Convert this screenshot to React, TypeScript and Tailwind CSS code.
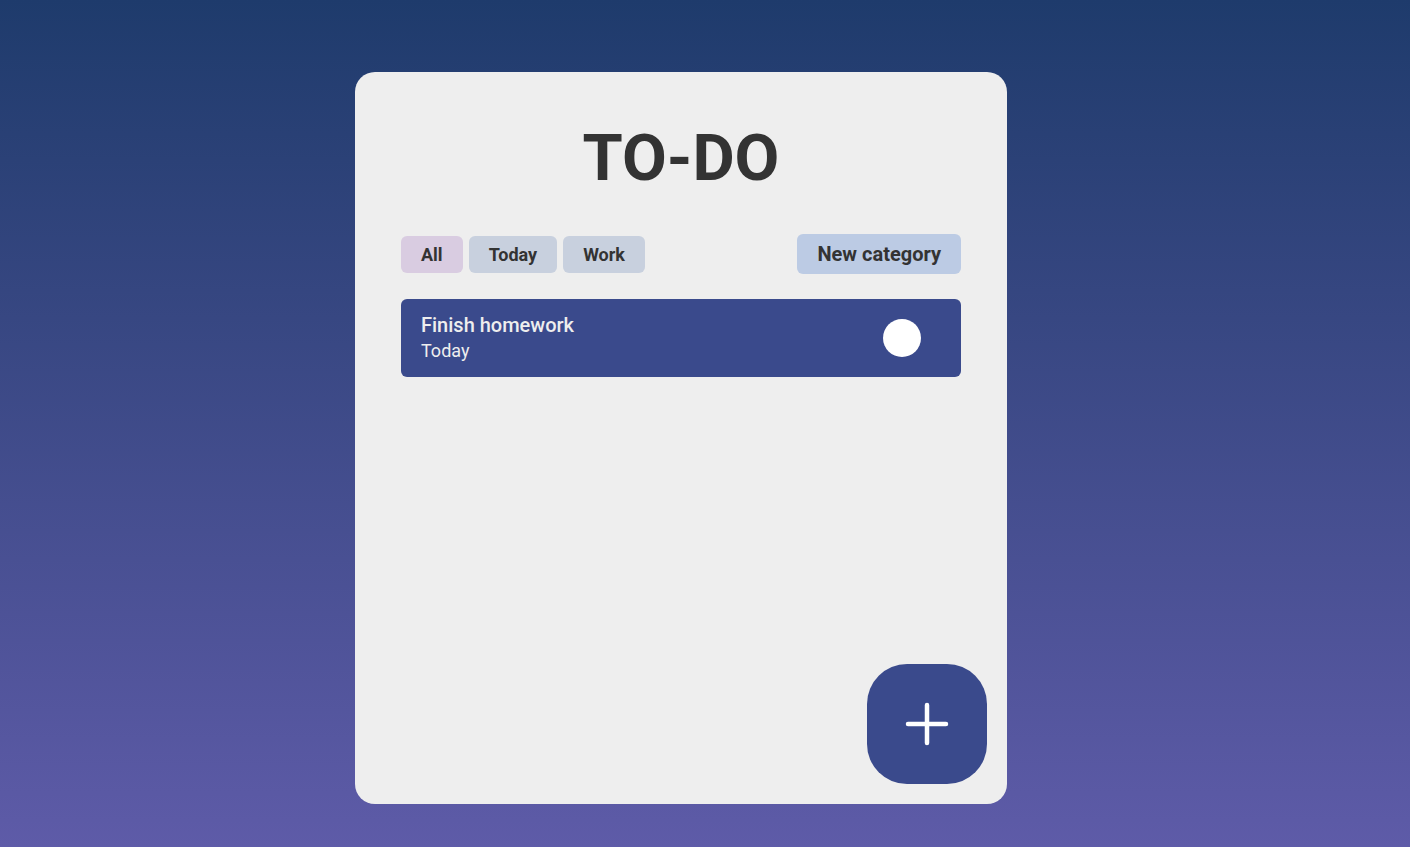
import React from 'react'

type Task = {
  title: string
  category: string
}

const categories = ['All', 'Today', 'Work']

const tasks: Task[] = [{ title: 'Finish homework', category: 'Today' }]

const App = () => {
  return (
    <div
      className="min-h-screen w-full bg-gradient-to-b from-[#1e3b6c] to-[#5e5ba8] flex justify-center pt-[72px] pb-[43px]"
      style={{ fontFamily: 'Roboto, "Liberation Sans", sans-serif' }}
    >
      <div className="relative w-[652px] h-[732px] mr-[48px] bg-[#eeeeee] rounded-[20px] px-[46px]">
        <h1 className="text-center text-[65px] font-bold text-[#333333] leading-none pt-[54px]">
          TO-DO
        </h1>

        <div className="flex items-center justify-between mt-[43px]">
          <div className="flex gap-[6px]">
            {categories.map((c, i) => (
              <button
                key={c}
                className={`h-[37px] rounded-[6px] text-[18px] font-bold text-[#333333] px-[20px] ${
                  i === 0 ? 'bg-[#d9cce1]' : 'bg-[#c8d0de]'
                }`}
              >
                {c}
              </button>
            ))}
          </div>
          <button className="h-[40px] px-[20px] rounded-[6px] bg-[#bccbe4] text-[20px] font-bold text-[#333333]">
            New category
          </button>
        </div>

        <div className="mt-[25px] flex flex-col gap-2">
          {tasks.map((t) => (
            <div
              key={t.title}
              className="h-[78px] rounded-[6px] bg-[#3a4a8c] flex items-center justify-between pl-[20px] pr-[40px]"
            >
              <div className="flex flex-col text-[#eeeeee]">
                <span className="text-[20px] font-medium leading-[26px]">{t.title}</span>
                <span className="text-[18px] leading-[26px]">{t.category}</span>
              </div>
              <div className="w-[38px] h-[38px] rounded-full bg-white" />
            </div>
          ))}
        </div>

        <button className="absolute right-[20px] bottom-[20px] w-[120px] h-[120px] rounded-[40px] bg-[#3a4a8c] flex items-center justify-center">
          <svg width="44" height="44" viewBox="0 0 44 44" fill="none">
            <path d="M22 3v38M3 22h38" stroke="white" strokeWidth="4.5" strokeLinecap="round" />
          </svg>
        </button>
      </div>
    </div>
  )
}

export default App
